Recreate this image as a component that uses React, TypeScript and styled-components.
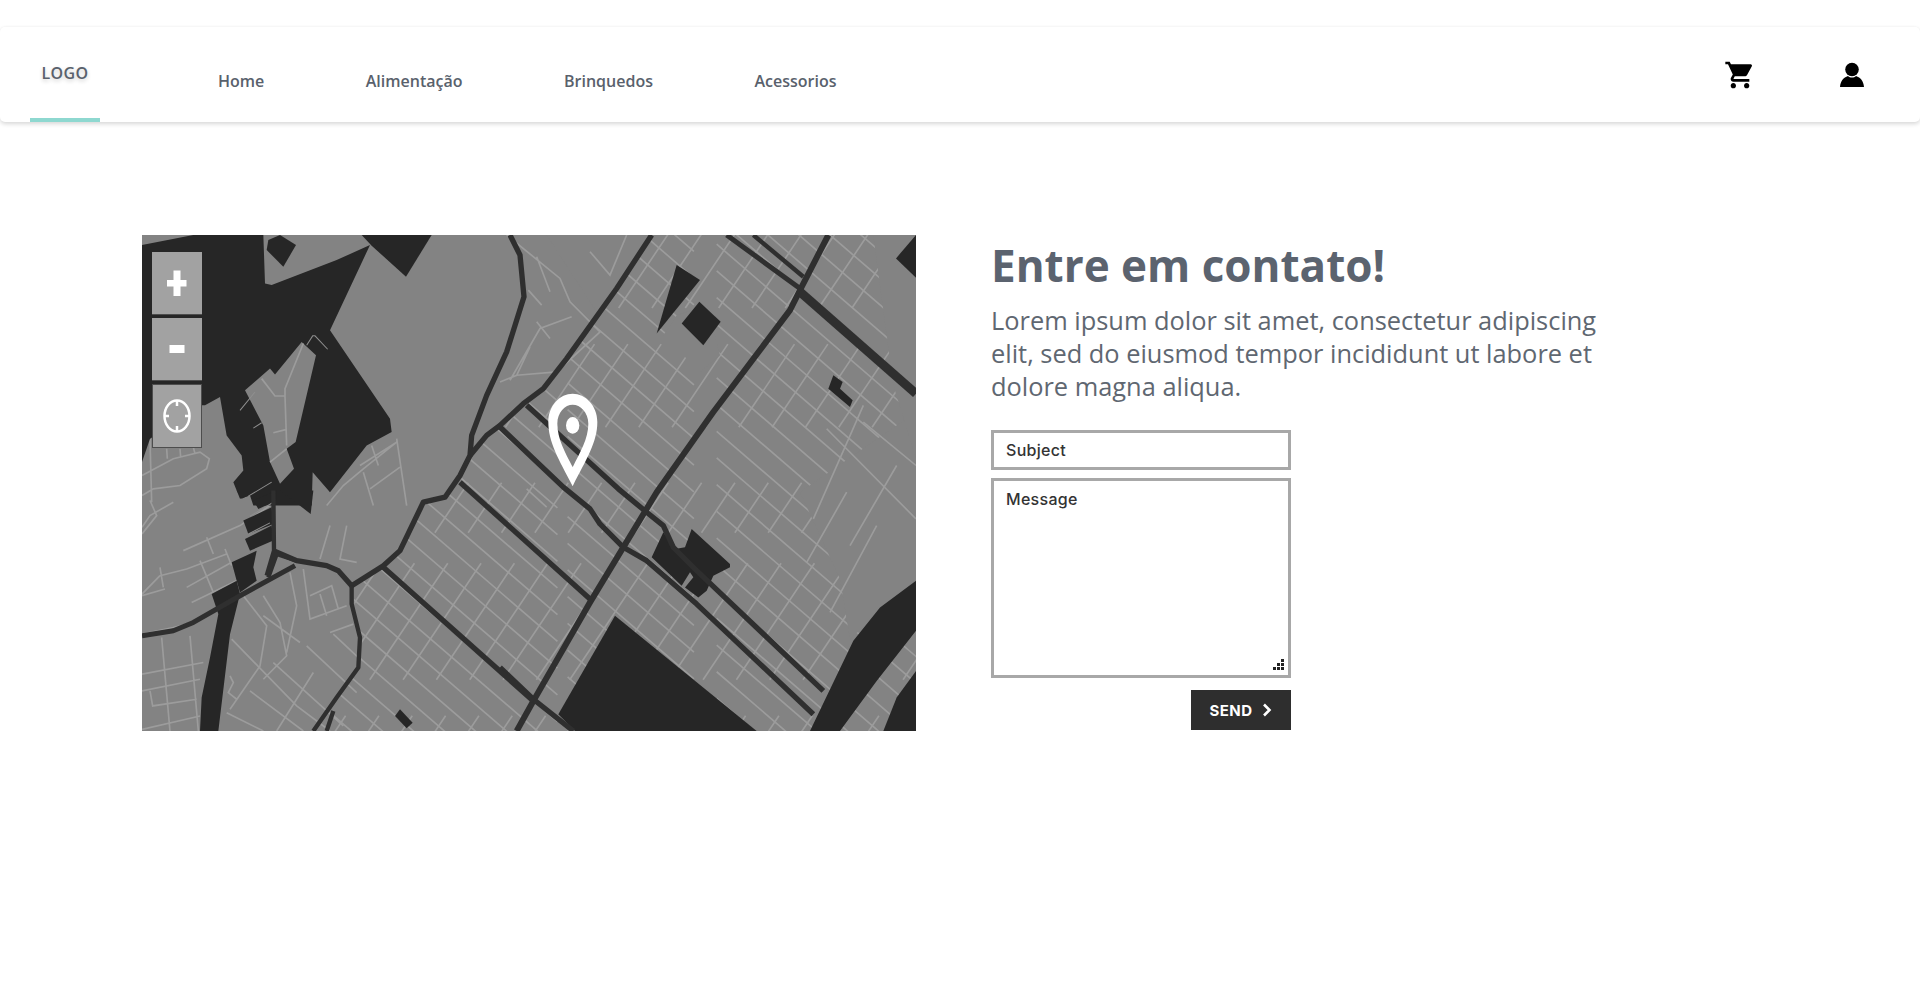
import styled, { createGlobalStyle } from 'styled-components';
import { MdShoppingCart } from 'react-icons/md';

const GlobalStyle = createGlobalStyle`
  html, body {
    margin: 0;
    background: #fff;
    font-family: 'Open Sans', 'Lato', sans-serif;
  }
`;

const Page = styled.div`
  min-height: 1006px;
  padding-top: 27px;
  box-sizing: border-box;
  overflow: hidden;
`;

const Nav = styled.nav`
  height: 95px;
  display: flex;
  border-radius: 5px;
  box-shadow: 0 2px 4px rgba(0, 0, 0, 0.16), 0 -1px 2px rgba(0, 0, 0, 0.02);
  padding: 0 52px 0 30px;
`;

const LogoTab = styled.a`
  width: 70px;
  box-sizing: border-box;
  padding-top: 36px;
  text-align: center;
  border-bottom: 4px solid #8ed8d0;
  color: #59616c;
  font-size: 16px;
  font-weight: 600;
  letter-spacing: 0.4px;
  line-height: 20px;
  text-shadow: 0 2px 4px rgba(0, 0, 0, 0.2);
`;

const Links = styled.div`
  display: flex;
  gap: 101.5px;
  margin-left: 118px;
  padding-top: 44px;
`;

const NavLink = styled.a`
  color: #59616c;
  font-size: 16px;
  font-weight: 600;
  line-height: 20px;
`;

const Icons = styled.div`
  margin-left: auto;
  display: flex;
  gap: 80px;
  padding-top: 32px;
  color: #000;
`;

const IconBox = styled.span`
  width: 32px;
  height: 32px;
  display: block;
`;

const Main = styled.main`
  display: flex;
  gap: 75px;
  margin-top: 113px;
  padding-left: 142px;
`;

const MapFrame = styled.div`
  position: relative;
  width: 774px;
  height: 496px;
  flex: none;
  overflow: hidden;
  background: #838383;
`;

const MapArt = styled.svg`
  display: block;
  width: 100%;
  height: 100%;
  filter: blur(0.5px);
`;

const MapControls = styled.div`
  position: absolute;
  left: 10px;
  top: 17px;
  display: flex;
  flex-direction: column;
  gap: 3px;
`;

const MapButton = styled.button<{ $tall?: boolean }>`
  width: 50px;
  height: ${({ $tall }) => ($tall ? 64 : 63)}px;
  padding: 0;
  border: 0;
  border-bottom: 1px solid #4d4d4d;
  background: #a2a2a2;
  display: flex;
  align-items: center;
  justify-content: center;
  ${({ $tall }) => $tall && 'border: 1px solid #4d4d4d;'}
`;

const Contact = styled.section`
  width: 630px;
`;

const Heading = styled.h1`
  margin: 5px 0 0;
  color: #5b636f;
  font-size: 44px;
  line-height: 50px;
  font-weight: 700;
`;

const Lead = styled.p`
  margin: 14px 0 0;
  color: #5f6771;
  font-size: 25.4px;
  line-height: 33px;
`;

const Form = styled.form`
  width: 300px;
  margin-top: 27px;
  display: flex;
  flex-direction: column;
`;

const fieldText = `
  width: 100%;
  box-sizing: border-box;
  border: 3px solid #a8a8a8;
  border-radius: 0;
  outline: none;
  background: #fff;
  font-family: 'Inter', sans-serif;
  font-size: 16px;
  font-weight: 500;
  letter-spacing: 0.3px;
  color: #333;
  padding-left: 12px;
  &::placeholder { color: #333; opacity: 1; }
`;

const SubjectInput = styled.input`
  ${fieldText}
  height: 40px;
`;

const MessageBox = styled.div`
  position: relative;
  margin-top: 8px;
  height: 200px;
`;

const MessageInput = styled.textarea`
  ${fieldText}
  display: block;
  height: 200px;
  padding-top: 8px;
  resize: none;
`;

const Grip = styled.svg`
  position: absolute;
  right: 7px;
  bottom: 7px;
`;

const SendButton = styled.button`
  align-self: flex-end;
  margin-top: 12px;
  width: 100px;
  height: 40px;
  border: 0;
  padding: 0;
  background: #2e2e2e;
  color: #fff;
  font-family: 'Inter', sans-serif;
  font-size: 15px;
  font-weight: 700;
  letter-spacing: 0.4px;
  display: flex;
  align-items: center;
  justify-content: center;
  gap: 10px;
`;

// coordinates: 3 units per page pixel, origin at (130, 225) of the page
const family = (x: number, y: number, dx: number, dy: number, sx: number, sy: number, n: number) =>
  Array.from({ length: n }, (_, i) => `M${x + sx * i},${y + sy * i}l${dx},${dy}`).join('');

const cityShape =
  '1565,30 1460,190 1310,400 1240,490 1110,600 1020,690 990,770 945,815 880,830 810,975 760,1020 665,1080 690,1235 685,1325 550,1515 2358,1515 2358,30';

const cityLong = family(600, -1500, 2400, 2064, 0, 80, 38);
const cityCross = family(800, -100, -1400, 2086, 100, 0, 27);

const quietAreas = [
  '2010,800 2358,560 2358,1060 2160,1240 2130,1060',
  '2230,30 2358,30 2358,700 2290,480',
  '1600,330 1640,270 1730,240 1770,390 1710,440',
  '1250,30 1560,30 1470,190 1400,260',
];

const westStreets = `M36,750 L130,700 L210,680 L238,700 L230,730 L150,780 L70,790 L36,810
M60,640 L65,830 M110,670 L112,700 M150,670 L152,695 M190,665 L195,685
M800,640 L830,840 M725,660 L745,720 M690,720 L800,650 M700,740 L730,840 M720,790 L810,725
M590,840 L640,780 L700,730 L800,650
M1110,470 L1160,450 L1200,365 M1160,450 L1280,440 L1410,320 L1320,230 L1290,160 L1130,30
M1220,290 L1260,340 M1195,195 L1235,240 M1220,95 L1260,200 M1380,80 L1440,150 L1490,30
M1140,465 L1230,310 L1325,275
M1190,790 L1250,845 M36,905 L60,870 L130,830 M60,825 L80,870 L36,925
M160,975 L330,900 L420,840 M230,935 L250,985 M285,970 L305,1020 M210,1005 L250,1100
M90,1050 L170,1030 L290,985 M36,1105 L90,1050 M170,1085 L305,1010 M185,1130 L330,1060
M90,1025 L100,1085 M36,1110 L105,1090
M36,1225 L130,1205 L190,1190 M95,1235 L120,1515 M180,1230 L205,1515 M36,1345 L220,1310
M36,1395 L210,1360 M60,1395 L68,1440 L200,1420 M36,1510 L210,1470
M305,1240 L500,1440 L600,1515 M340,1110 L410,1200 L390,1320 L300,1450
M400,1110 L450,1190 L470,1290 L400,1360 M480,1040 L500,1140 L470,1280
M520,1030 L540,1180 L650,1140 M540,1110 L605,1080 L625,1150 M570,1105 L590,1170
M400,1170 L510,1250 M530,1260 L680,1400 M430,1310 L640,1500 M360,1395 L520,1515 M550,1340 L440,1515
M600,1220 L670,1195 M610,1225 L690,1300 M290,1460 L400,1515 M600,900 L570,1000 M650,900 L630,1000 L680,1010
M300,1350 L310,1370 L295,1400 L320,1420`;

const parks = [
  '36,60 190,30 400,30 405,175 425,180 620,105 720,60 600,315 780,580 785,620 710,660 600,800 548,740 545,840 370,840 360,810 330,820 310,770 340,735 335,690 290,630 270,515 225,540 215,540 60,640 36,710',
  '415,45 450,30 498,60 460,125 410,75',
  '695,30 905,30 828,155 725,62',
  '450,795 550,795 542,865',
  '320,795 385,795 335,820',
  '370,825 440,795 440,825 385,850',
  '340,885 425,845 430,895 355,925',
  '345,940 425,900 430,945 360,975',
  '305,1010 380,975 370,1025 380,1065 330,1100 320,1065',
  '245,1105 320,1065 330,1105 300,1225 265,1515 210,1515 215,1415 240,1295 265,1165',
  '810,1450 848,1490 830,1507 795,1470',
  '1640,120 1710,165 1580,325',
  '1708,230 1772,290 1720,360 1655,295',
  '2358,30 2298,100 2358,158',
  '2110,450 2138,470 2130,490 2168,525 2160,545 2095,490',
  '1600,920 1565,995 1655,1080 1680,1040 1690,1055 1665,1085 1705,1115 1730,1095 1750,1050 1800,1025 1800,1015 1685,910 1665,965 1635,970',
  '1455,1170 1285,1465 1335,1515 1880,1515',
  '2358,1065 2250,1145 2170,1245 2040,1515 2130,1515 2240,1365 2358,1215',
  '2358,1335 2300,1415 2260,1515 2358,1515',
];

const gapsOverParks = `M530,360 L548,332 L555,332 L593,372 M330,555 L375,500 M370,608 L395,592
M355,812 L425,770 M360,872 L430,830 M355,925 L420,892`;

const patches = ['345,495 420,430 435,448 515,350 558,390 497,650 470,670 492,730 450,775 420,710 400,600'];

const roads = [
  { w: 16, d: 'M1140,30 L1170,90 L1182,215 L1130,380 L1070,510 L1025,630 L1020,690 L990,750 L945,815 L880,830 L810,975 L760,1020 L665,1080 L625,1035 L590,1020 L500,1005 L430,975' },
  { w: 16, d: 'M1565,30 L1460,190 L1310,400 L1240,490 L1180,535 L1110,600 L1070,630 L1020,690' },
  { w: 16, d: 'M1110,605 L1300,785 L1380,850 L1410,895 L1480,965 L1550,1005 L1700,1135 L2050,1465' },
  { w: 16, d: 'M1190,540 L1465,790 L1550,860 L1600,900 L1630,965 L1700,1035 L2080,1395' },
  { w: 16, d: 'M990,770 L1380,1120' },
  { w: 18, d: 'M2095,30 L2015,185 L1980,255 L1750,560 L1580,800 L1380,1130 L1210,1425 L1160,1515' },
  { w: 15, d: 'M1790,30 L2010,190' },
  { w: 27, d: 'M2010,200 L2358,505' },
  { w: 13, d: 'M1870,30 L2020,155' },
  { w: 16, d: 'M1110,1325 L1210,1420 L1330,1515' },
  { w: 15, d: 'M36,1230 L130,1215 L190,1190 L330,1110 L495,1020' },
  { w: 13, d: 'M430,795 L432,975 L410,1050 M500,1005 L440,985 L415,1055' },
  { w: 13, d: 'M665,1080 L665,1135 L690,1235 L685,1325 L620,1415 L550,1515 M590,1515 L610,1455' },
  { w: 16, d: 'M760,1025 L1210,1425' },
];

const CityMap = () => (
  <MapArt viewBox="36 30 2322 1485" preserveAspectRatio="none">
    <defs>
      <clipPath id="city">
        <polygon points={cityShape} />
      </clipPath>
    </defs>
    <g fill="none" stroke="#9c9c9c" strokeWidth="5">
      <g clipPath="url(#city)">
        <path d={cityLong} strokeDasharray="900 40 500 90" />
        <path d={cityCross} strokeDasharray="420 130 300 200 180 110" />
      </g>
      {quietAreas.map((points) => (
        <polygon key={points} points={points} fill="#838383" stroke="none" />
      ))}
      <path d={westStreets} />
      <path d="M2150,800 L2030,1010 M2240,900 L2100,1160 M2200,540 L2050,880 M2358,720 L2200,590 M2090,610 L2358,880 M2300,720 L2160,960" />
    </g>
    <g fill="#262626">
      {parks.map((points) => (
        <polygon key={points} points={points} />
      ))}
    </g>
    {patches.map((points) => (
      <polygon key={points} points={points} fill="#838383" />
    ))}
    <path d={gapsOverParks} fill="none" stroke="#8f8f8f" strokeWidth="3" />
    <path d="M395,460 L435,512 L465,512 L470,660 M465,512 L465,490 L520,355 M430,622 L470,612 M420,710 L470,670" fill="none" stroke="#9c9c9c" strokeWidth="5" />
    <g fill="none" stroke="#2f2f2f" strokeLinejoin="round">
      {roads.map((road) => (
        <path key={road.d} d={road.d} strokeWidth={road.w} />
      ))}
    </g>
    <path
      fill="#fff"
      fillRule="evenodd"
      d="M1328,782 C1285,700 1255,650 1255,590 C1255,540 1290,505 1328,505 C1366,505 1402,540 1402,590 C1402,650 1370,700 1328,782Z
         M1328,725 C1305,680 1282,640 1282,595 C1282,560 1305,538 1328,538 C1351,538 1375,560 1375,595 C1375,640 1350,680 1328,725Z"
    />
    <ellipse cx="1328" cy="600" rx="20" ry="25" fill="#fff" />
  </MapArt>
);

const ControlIcon = ({ kind }: { kind: 'plus' | 'minus' | 'locate' }) => (
  <svg width="30" height="36" viewBox="0 0 30 36">
    {kind === 'plus' && <path d="M11.5,5.5h7v9.5h6v6.5h-6v9.5h-7v-9.5h-6.500v-6.500h6.500z" fill="#fff" />}
    {kind === 'minus' && <rect x="7.500" y="14" width="15" height="8" fill="#fff" />}
    {kind === 'locate' && (
      <g fill="none" stroke="#fff" strokeWidth="2.500">
        <ellipse cx="15" cy="18" rx="12.500" ry="15.500" />
        <path d="M15,3v5M15,28v5M3,18h4M23,18h4" />
      </g>
    )}
  </svg>
);

export default function App() {
  return (
    <Page>
      <GlobalStyle />
      <Nav>
        <LogoTab>LOGO</LogoTab>
        <Links>
          <NavLink>Home</NavLink>
          <NavLink>Alimentação</NavLink>
          <NavLink>Brinquedos</NavLink>
          <NavLink>Acessorios</NavLink>
        </Links>
        <Icons>
          <IconBox>
            <MdShoppingCart size={32} />
          </IconBox>
          <IconBox>
            <svg width="32" height="32" viewBox="0 0 32 32">
              <circle cx="16" cy="10.5" r="6.800" fill="#000" />
              <path d="M4,28 C4.500,22 7.500,18.500 12,17 C14,19 18,19 20,17 C24.500,18.500 27.500,22 28,28Z" fill="#000" />
            </svg>
          </IconBox>
        </Icons>
      </Nav>
      <Main>
        <MapFrame>
          <CityMap />
          <MapControls>
            <MapButton><ControlIcon kind="plus" /></MapButton>
            <MapButton><ControlIcon kind="minus" /></MapButton>
            <MapButton $tall><ControlIcon kind="locate" /></MapButton>
          </MapControls>
        </MapFrame>
        <Contact>
          <Heading>Entre em contato!</Heading>
          <Lead>
            Lorem ipsum dolor sit amet, consectetur adipiscing elit, sed do eiusmod tempor incididunt ut labore et
            dolore magna aliqua.
          </Lead>
          <Form>
            <SubjectInput placeholder="Subject" />
            <MessageBox>
              <MessageInput placeholder="Message" />
              <Grip width="12" height="12" viewBox="0 0 12 12" fill="#222">
                <path d="M9,0h3v3h-3zM5,4h3v3h-3zM9,4h3v3h-3zM1,8h3v3h-3zM5,8h3v3h-3zM9,8h3v3h-3z" />
              </Grip>
            </MessageBox>
            <SendButton type="button">
              SEND
              <svg width="10" height="14" viewBox="0 0 10 14" fill="none" stroke="#fff" strokeWidth="2.600">
                <path d="M2,1.500 L7.500,7 L2,12.500" />
              </svg>
            </SendButton>
          </Form>
        </Contact>
      </Main>
    </Page>
  );
}
